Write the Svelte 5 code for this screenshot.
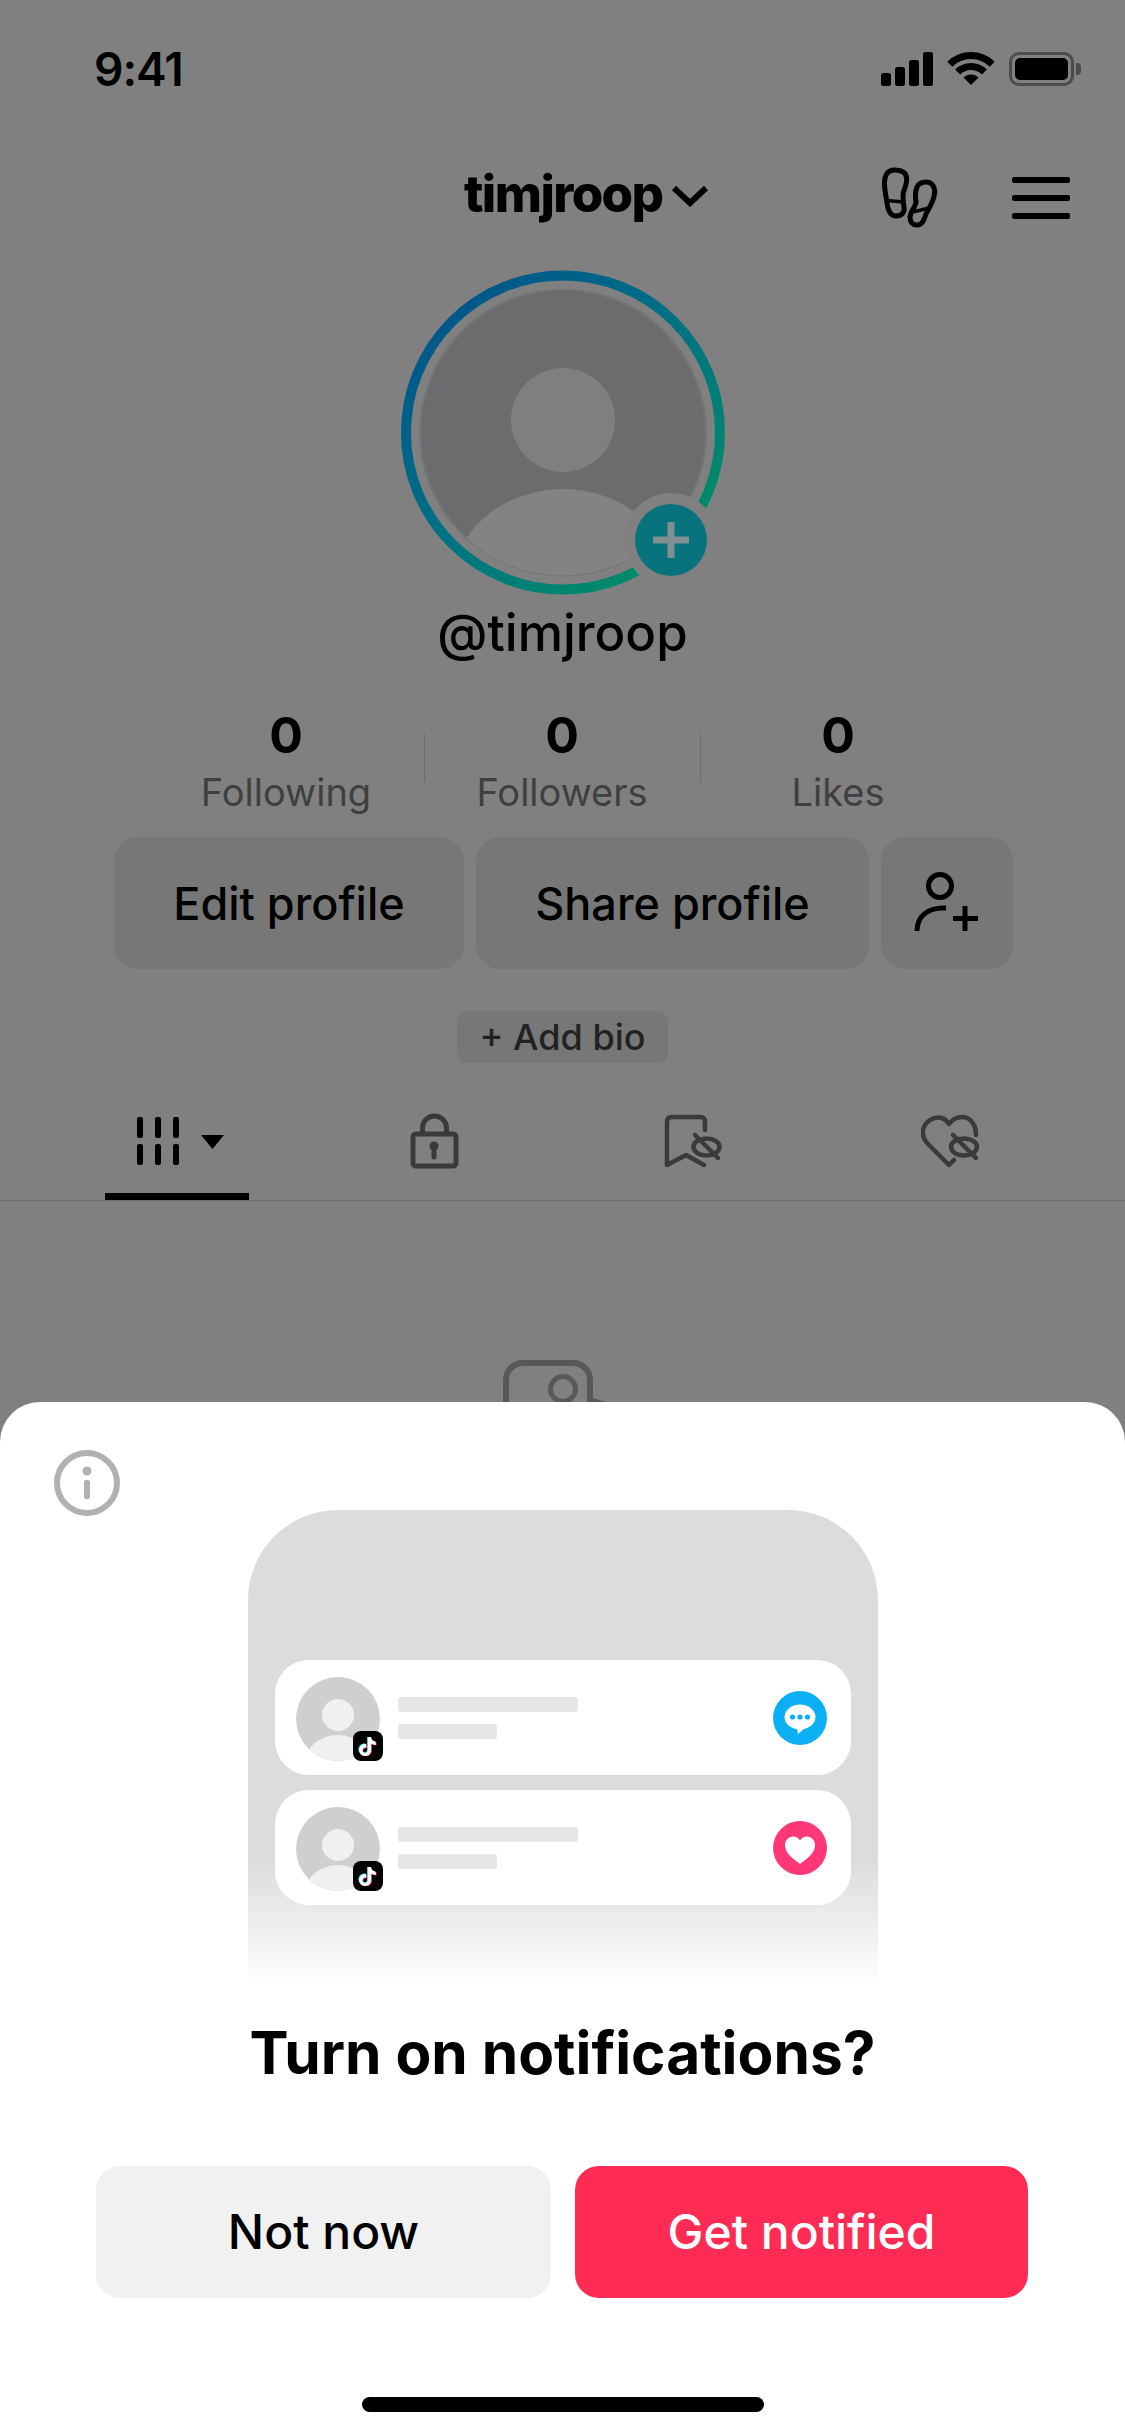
<script>
  const stats = [
    { value: '0', label: 'Following' },
    { value: '0', label: 'Followers' },
    { value: '0', label: 'Likes' }
  ];

  const notifications = ['message', 'like'];

  const tiktokNote =
    'M12.525.02c1.31-.02 2.61-.01 3.91-.02.08 1.53.63 3.09 1.75 4.17 1.12 1.11 2.7 1.62 4.24 1.79v4.03c-1.44-.05-2.89-.35-4.2-.97-.57-.26-1.1-.59-1.62-.93-.01 2.92.01 5.84-.02 8.75-.08 1.4-.54 2.79-1.35 3.94-1.31 1.92-3.58 3.17-5.91 3.21-1.43.08-2.86-.31-4.08-1.03-2.02-1.19-3.44-3.37-3.65-5.71-.02-.5-.03-1-.01-1.49.18-1.9 1.12-3.72 2.58-4.96 1.66-1.44 3.98-2.13 6.15-1.72.02 1.48-.04 2.96-.04 4.44-.99-.32-2.15-.23-3.02.37-.63.41-1.11 1.04-1.36 1.75-.21.51-.15 1.07-.14 1.61.24 1.64 1.82 3.02 3.5 2.87 1.12-.01 2.19-.66 2.77-1.61.19-.33.4-.67.41-1.06.1-1.79.06-3.57.07-5.36.01-4.03-.01-8.05.02-12.07z';
</script>

<div class="page">
  <div class="status">
    <span class="time">9:41</span>
    <div class="status-icons">
      <svg class="signal" viewBox="0 0 52 34" fill="#000">
        <rect x="0" y="21" width="10" height="13" rx="2.5" />
        <rect x="14" y="15" width="10" height="19" rx="2.5" />
        <rect x="28" y="8" width="10" height="26" rx="2.5" />
        <rect x="42" y="0" width="10" height="34" rx="2.5" />
      </svg>
      <svg class="wifi" viewBox="0 0 48 36" fill="none" stroke="#000" stroke-width="7">
        <path d="M2.8 15.2A30 30 0 0 1 45.2 15.2" />
        <path d="M10.6 23A19 19 0 0 1 37.4 23" />
        <path d="M24 36L16.5 28.5A10.6 10.6 0 0 1 31.5 28.5Z" fill="#000" stroke="none" />
      </svg>
      <div class="battery">
        <div class="battery-fill"></div>
      </div>
    </div>
  </div>

  <div class="nav">
    <div class="account">
      <span class="account-name">timjroop</span>
      <svg class="chevron" viewBox="0 0 36 22" fill="none" stroke="#000" stroke-width="6">
        <path d="M2 3L18 18L34 3" />
      </svg>
    </div>
    <div class="nav-actions">
      <svg class="footprints" viewBox="0 0 60 64" fill="none" stroke="#000" stroke-width="5" stroke-linejoin="round">
        <path d="M14 4C8 4 4.500 9 4.500 17C4.500 24 6 30 7 37C8 45 11 50 16 50C22 50 25 46 24 41C23 35 22.500 31 23.500 26C25.500 20 27.500 16 26.500 11C25.500 6 20 4 14 4Z" />
        <path d="M7 34.500L23 36" stroke-width="3.500" />
        <path d="M46 16C52 16 55.500 21 54.500 28C53.500 36 49 42 46 48C44 54 42 60 36 59C30 58 29 52 31 47C33 42 36 40 36 36C35 30 35 26 37 21C39 17 42 16 46 16Z" />
        <path d="M33 46L49 42" stroke-width="3.500" />
      </svg>
      <div class="menu">
        <span></span>
        <span></span>
        <span></span>
      </div>
    </div>
  </div>

  <svg class="avatar" viewBox="0 0 330 330">
    <defs>
      <linearGradient id="ring" x1="0.12" y1="0.1" x2="0.85" y2="0.9">
        <stop offset="0" stop-color="#00568a" />
        <stop offset="0.5" stop-color="#007283" />
        <stop offset="1" stop-color="#008c68" />
      </linearGradient>
      <clipPath id="avatar-clip">
        <circle cx="165" cy="164.5" r="143" />
      </clipPath>
    </defs>
    <circle cx="165" cy="164.5" r="157" fill="none" stroke="url(#ring)" stroke-width="10" />
    <circle cx="165" cy="164.5" r="143" fill="#6b6c6d" stroke="#757575" stroke-width="2" />
    <g clip-path="url(#avatar-clip)">
      <circle cx="165" cy="152" r="52" fill="#7f7f7f" />
      <ellipse cx="165" cy="320" rx="112" ry="99" fill="#838383" />
    </g>
    <circle cx="273" cy="272" r="47" fill="#808080" />
    <circle cx="273" cy="272" r="36" fill="#08727d" />
    <path d="M255 272H291M273 254V290" stroke="#7f8f92" stroke-width="7" />
  </svg>

  <div class="username">@timjroop</div>

  <div class="stats">
    {#each stats as stat, i}
      {#if i > 0}
        <div class="divider"></div>
      {/if}
      <div class="stat">
        <div class="stat-value">{stat.value}</div>
        <div class="stat-label">{stat.label}</div>
      </div>
    {/each}
  </div>

  <div class="actions">
    <div class="action edit">Edit profile</div>
    <div class="action share">Share profile</div>
    <div class="action add">
      <svg viewBox="0 0 70 64" fill="none" stroke="#000" stroke-width="5">
        <circle cx="28" cy="15" r="11.5" />
        <path d="M5 60C5 46 15 36 34 37" />
        <path d="M53 35V60M41 47.5H66" />
      </svg>
    </div>
  </div>

  <div class="bio">+ Add bio</div>

  <div class="tabs">
    <div class="tab">
      <svg class="tab-main" viewBox="105 1112 144 60">
        <g fill="#000">
          <rect x="137" y="1117" width="6" height="21" rx="2" />
          <rect x="155" y="1117" width="6" height="21" rx="2" />
          <rect x="173" y="1117" width="6" height="21" rx="2" />
          <rect x="137" y="1144" width="6" height="21" rx="2" />
          <rect x="155" y="1144" width="6" height="21" rx="2" />
          <rect x="173" y="1144" width="6" height="21" rx="2" />
          <path d="M201 1135H224L212.5 1149Z" />
        </g>
      </svg>
      <div class="tab-line"></div>
    </div>
    <div class="tab">
      <svg viewBox="405 1112 60 60" fill="none" stroke="#3a3a3a" stroke-width="5">
        <rect x="413" y="1134" width="43" height="32" rx="3" />
        <path d="M422.5 1134V1128A12 12 0 0 1 446.500 1128V1134" />
        <circle cx="434" cy="1146" r="4.500" fill="#3a3a3a" stroke="none" />
        <path d="M434 1148V1157" stroke-linecap="round" />
      </svg>
    </div>
    <div class="tab">
      <svg viewBox="663 1112 60 60" fill="none" stroke="#3a3a3a" stroke-width="4.500" stroke-linecap="round" stroke-linejoin="round">
        <path d="M705 1130V1122Q705 1117 700 1117H672Q667 1117 667 1122V1165L686 1155L704 1165" />
        <ellipse cx="706.500" cy="1147" rx="13" ry="8.500" />
        <path d="M695 1135L718 1158" />
      </svg>
    </div>
    <div class="tab">
      <svg viewBox="921 1112 60 60" fill="none" stroke="#3a3a3a" stroke-width="4.500" stroke-linecap="round" stroke-linejoin="round">
        <path d="M954 1160L949 1165L929 1145C923 1139 922 1135 923 1130C925 1121 934 1116 942 1118C945 1119 947 1121 949 1124C952 1120 956 1117 962 1117C970 1117 976 1124 976 1135" />
        <ellipse cx="964" cy="1147" rx="13" ry="8.500" />
        <path d="M953 1135L976 1158" />
      </svg>
    </div>
  </div>

  <svg class="empty-icon" viewBox="500 1356 114 60" fill="none" stroke="#585858" stroke-width="6">
    <rect x="506" y="1363" width="84" height="90" rx="17" />
    <circle cx="563" cy="1389" r="12.500" stroke-width="5" />
    <path d="M590 1397L612 1404H590Z" fill="#585858" stroke="none" />
  </svg>

  <div class="sheet">
    <svg class="info" viewBox="0 0 66 66">
      <circle cx="33" cy="33" r="30" fill="none" stroke="#b1b1b1" stroke-width="6" />
      <circle cx="33" cy="21" r="4.500" fill="#b1b1b1" />
      <rect x="30" y="30" width="6" height="19" rx="2" fill="#b1b1b1" />
    </svg>

    <div class="phone">
      {#each notifications as kind}
        <div class="card">
          <div class="card-avatar">
            <svg class="person" viewBox="0 0 84 84">
              <clipPath id="person-{kind}">
                <circle cx="42" cy="42" r="42" />
              </clipPath>
              <circle cx="42" cy="42" r="42" fill="#cdcfd1" />
              <circle cx="42" cy="38" r="16" fill="#f0f0f0" />
              <ellipse cx="42" cy="86" rx="33" ry="28" fill="#f0f0f0" clip-path="url(#person-{kind})" />
            </svg>
            <div class="app-badge">
              <svg viewBox="0 0 24 24">
                <path d={tiktokNote} fill="#25f4ee" transform="translate(-1 -0.8)" />
                <path d={tiktokNote} fill="#fe2c55" transform="translate(1 0.8)" />
                <path d={tiktokNote} fill="#fff" />
              </svg>
            </div>
          </div>
          <div class="lines">
            <div class="line long"></div>
            <div class="line short"></div>
          </div>
          <svg class="kind" viewBox="0 0 54 54">
            {#if kind === 'message'}
              <circle cx="27" cy="27" r="27" fill="#0bb0f4" />
              <ellipse cx="27" cy="26" rx="15.500" ry="12.500" fill="#fff" />
              <path d="M24 36L25 43L33 36Z" fill="#fff" />
              <circle cx="19.500" cy="26" r="2.600" fill="#0bb0f4" />
              <circle cx="27" cy="26" r="2.600" fill="#0bb0f4" />
              <circle cx="34.500" cy="26" r="2.600" fill="#0bb0f4" />
            {:else}
              <circle cx="27" cy="27" r="27" fill="#fe3877" />
              <path d="M27 43C21 38 12 33 12 24C12 19 16 15.500 20 15.500C23 15.500 25.500 17 27 19.500C28.500 17 31 15.500 34 15.500C38 15.500 42 19 42 24C42 33 33 38 27 43Z" fill="#fff" />
            {/if}
          </svg>
        </div>
      {/each}
    </div>

    <div class="sheet-title">Turn on notifications?</div>

    <div class="sheet-actions">
      <div class="sheet-btn later">Not now</div>
      <div class="sheet-btn primary">Get notified</div>
    </div>

    <div class="home-bar"></div>
  </div>
</div>

<style>
  :global(body) {
    margin: 0;
  }

  .page {
    position: relative;
    width: 1125px;
    height: 2436px;
    overflow: hidden;
    background: #808080;
    font-family: Inter, 'Liberation Sans', sans-serif;
    color: #000;
  }

  .status {
    display: flex;
    align-items: center;
    justify-content: space-between;
    height: 138px;
    padding: 0 44px 0 94px;
  }

  .time {
    font-size: 46px;
    font-weight: 600;
    letter-spacing: -1px;
    line-height: 1;
  }

  .status-icons {
    display: flex;
    align-items: center;
  }

  .signal {
    width: 52px;
    height: 34px;
  }

  .wifi {
    width: 48px;
    height: 36px;
    margin: -4px 0 0 14px;
  }

  .battery {
    position: relative;
    box-sizing: border-box;
    width: 65px;
    height: 34px;
    margin: 0 7px 0 14px;
    padding: 3px;
    border: 3px solid #4c4c4c;
    border-radius: 10px;
  }

  .battery::after {
    content: '';
    position: absolute;
    right: -10px;
    top: 8px;
    width: 5px;
    height: 12px;
    border-radius: 0 4px 4px 0;
    background: #4c4c4c;
  }

  .battery-fill {
    height: 100%;
    border-radius: 5px;
    background: #000;
  }

  .nav {
    display: flex;
    align-items: center;
    height: 64px;
    margin-top: 28px;
    padding: 0 55px 0 464px;
  }

  .account {
    display: flex;
    align-items: center;
    margin-bottom: 9px;
  }

  .account-name {
    font-size: 51px;
    font-weight: 800;
    letter-spacing: -1.6px;
    line-height: 64px;
  }

  .chevron {
    width: 36px;
    height: 22px;
    margin-left: 9px;
    margin-top: 4px;
  }

  .nav-actions {
    display: flex;
    align-items: center;
    margin-left: auto;
    gap: 72px;
  }

  .footprints {
    width: 60px;
    height: 64px;
  }

  .menu {
    display: flex;
    flex-direction: column;
    gap: 12px;
    width: 58px;
  }

  .menu span {
    height: 6px;
    border-radius: 2px;
    background: #000;
  }

  .avatar {
    display: block;
    width: 330px;
    height: 330px;
    margin: 38px auto 0 398px;
  }

  .username {
    margin-top: 5px;
    font-size: 51px;
    font-weight: 500;
    line-height: 60px;
    text-align: center;
  }

  .stats {
    display: flex;
    margin: 45px 0 0 148px;
  }

  .stat {
    width: 276px;
    text-align: center;
  }

  .stat-value {
    font-size: 50px;
    font-weight: 700;
    line-height: 54px;
  }

  .stat-label {
    margin-top: 8px;
    font-size: 38px;
    line-height: 44px;
    color: #3f3f3f;
  }

  .divider {
    width: 1px;
    height: 48px;
    margin: 26px -1px 0 0;
    background: #6c6c6c;
  }

  .actions {
    display: flex;
    gap: 12px;
    margin: 23px 0 0 114px;
  }

  .action {
    display: flex;
    align-items: center;
    justify-content: center;
    height: 132px;
    border-radius: 24px;
    background: #777;
    font-size: 45px;
    font-weight: 500;
  }

  .edit {
    width: 350px;
  }

  .share {
    width: 393px;
  }

  .add {
    width: 132px;
  }

  .add svg {
    width: 70px;
    height: 64px;
  }

  .bio {
    width: 211px;
    height: 52px;
    margin: 42px auto 0;
    border-radius: 10px;
    background: #777;
    color: #222;
    font-size: 36px;
    font-weight: 500;
    line-height: 52px;
    text-align: center;
  }

  .tabs {
    display: grid;
    grid-template-columns: repeat(4, 258px);
    box-sizing: border-box;
    height: 87px;
    margin-top: 51px;
    padding-left: 48px;
    border-bottom: 1px solid #6e6e6e;
  }

  .tab {
    display: flex;
    flex-direction: column;
    align-items: center;
    justify-content: space-between;
  }

  .tab svg {
    width: 60px;
    height: 60px;
    margin-top: -2px;
  }

  .tab svg.tab-main {
    width: 144px;
  }

  .tab-line {
    width: 144px;
    height: 7px;
    background: #000;
  }

  .empty-icon {
    display: block;
    width: 114px;
    height: 60px;
    margin: 155px 0 0 500px;
  }

  .sheet {
    position: absolute;
    left: 0;
    right: 0;
    top: 1402px;
    bottom: 0;
    border-radius: 40px 40px 0 0;
    background: #fff;
  }

  .info {
    position: absolute;
    left: 54px;
    top: 48px;
    width: 66px;
    height: 66px;
  }

  .phone {
    display: flex;
    flex-direction: column;
    gap: 15px;
    box-sizing: border-box;
    width: 630px;
    height: 475px;
    margin: 108px auto 0;
    padding: 150px 27px 0;
    border-radius: 90px 90px 0 0;
    background: linear-gradient(#dcdcde 74%, #fff 100%);
  }

  .card {
    display: flex;
    align-items: center;
    height: 115px;
    padding: 0 24px 0 21px;
    border-radius: 34px;
    background: #fff;
  }

  .card-avatar {
    position: relative;
    width: 84px;
    height: 84px;
    margin-top: 3px;
  }

  .person {
    display: block;
    width: 84px;
    height: 84px;
  }

  .app-badge {
    position: absolute;
    left: 57px;
    top: 54px;
    display: flex;
    align-items: center;
    justify-content: center;
    width: 30px;
    height: 30px;
    border-radius: 8px;
    background: #000;
  }

  .app-badge svg {
    width: 19px;
    height: 19px;
  }

  .lines {
    display: flex;
    flex-direction: column;
    gap: 12px;
    margin-left: 18px;
  }

  .line {
    height: 15px;
    border-radius: 3px;
    background: #e6e6e6;
  }

  .long {
    width: 180px;
  }

  .short {
    width: 99px;
  }

  .kind {
    width: 54px;
    height: 54px;
    margin-left: auto;
  }

  .sheet-title {
    margin-top: 32px;
    font-size: 58.6px;
    font-weight: 700;
    line-height: 72px;
    text-align: center;
  }

  .sheet-actions {
    display: flex;
    gap: 24px;
    margin: 77px 0 0 96px;
  }

  .sheet-btn {
    width: 453px;
    height: 132px;
    border-radius: 24px;
    font-size: 48px;
    font-weight: 500;
    line-height: 132px;
    text-align: center;
  }

  .later {
    width: 455px;
    background: #f1f1f2;
  }

  .primary {
    background: #fe2c55;
    color: #fff;
  }

  .home-bar {
    width: 402px;
    height: 15px;
    margin: 99px auto 0;
    border-radius: 8px;
    background: #000;
  }
</style>
